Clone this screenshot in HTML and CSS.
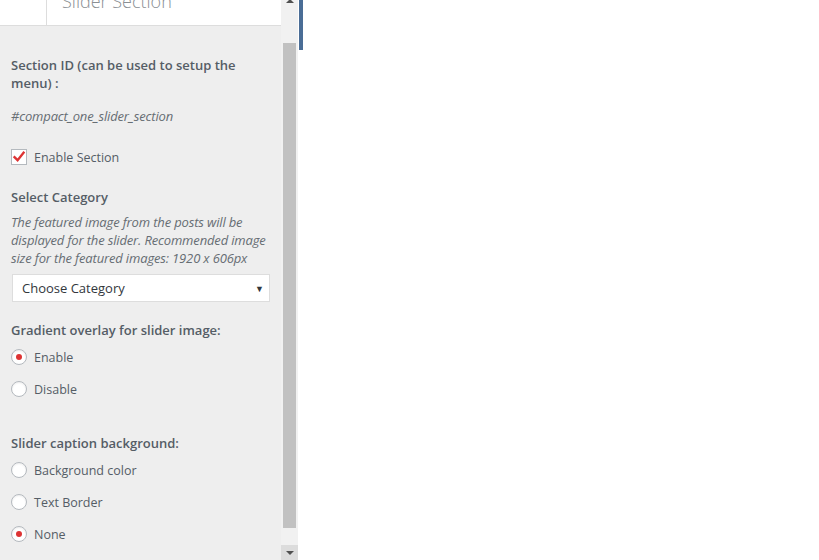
FILE: index.html
```html
<!DOCTYPE html>
<html>
<head>
<meta charset="utf-8">
<link rel="stylesheet" href="styles.css">
</head>
<body>
<div class="app">
  <div class="sidebar">
    <div class="head">
      <div class="back"></div>
      <div class="title">Slider Section</div>
    </div>
    <div class="controls">
      <div class="ctrl ctrl-id">
        <div class="label">Section ID (can be used to setup the menu) :</div>
        <div class="idtext">#compact_one_slider_section</div>
      </div>
      <label class="check">
        <span class="box"><svg width="14" height="14" viewBox="0 0 14 14"><path d="M2.5 7.2 L5.6 10.2 L11.6 2.6" fill="none" stroke="#dd3333" stroke-width="2.3" stroke-linecap="square"/></svg></span>
        <span>Enable Section</span>
      </label>
      <div class="ctrl ctrl-cat">
        <div class="label">Select Category</div>
        <div class="desc">The featured image from the posts will be displayed for the slider. Recommended image size for the featured images: 1920 x 606px</div>
        <div class="select"><span>Choose Category</span><span class="caret">&#9660;</span></div>
      </div>
      <div class="ctrl ctrl-grad">
        <div class="label">Gradient overlay for slider image:</div>
        <div class="radio"><span class="dot on"></span><span>Enable</span></div>
        <div class="radio"><span class="dot"></span><span>Disable</span></div>
      </div>
      <div class="ctrl ctrl-cap">
        <div class="label">Slider caption background:</div>
        <div class="radio"><span class="dot"></span><span>Background color</span></div>
        <div class="radio"><span class="dot"></span><span>Text Border</span></div>
        <div class="radio"><span class="dot on"></span><span>None</span></div>
      </div>
    </div>
  </div>
  <div class="scrollbar">
    <div class="arrow up"></div>
    <div class="thumb"></div>
    <div class="btn"><div class="arrow down"></div></div>
  </div>
  <div class="gap"></div>
  <div class="accent"></div>
  <div class="main"></div>
</div>
</body>
</html>
```
FILE: styles.css
```css
html, body {
  margin: 0;
  padding: 0;
  height: 100%;
  background: #fff;
  overflow: hidden;
}
body {
  font-family: "Open Sans", "Noto Sans", sans-serif;
  color: #555d66;
}
.app {
  display: flex;
  height: 560px;
}
.sidebar {
  width: 281px;
  background: #eeeeee;
  display: flex;
  flex-direction: column;
  overflow: hidden;
}
.head {
  height: 25px;
  background: #fff;
  border-bottom: 1px solid #dddddd;
  display: flex;
  overflow: hidden;
  flex-shrink: 0;
}
.back {
  width: 46px;
  border-right: 1px solid #dddddd;
}
.title {
  font-size: 18px;
  font-weight: 300;
  color: #8a8f94;
  line-height: 20px;
  margin-top: -9px;
  padding-left: 15px;
  white-space: nowrap;
}
.controls {
  padding: 30px 12px 0 11px;
  display: flex;
  flex-direction: column;
}
.label {
  font-size: 13px;
  font-weight: 600;
  line-height: 18px;
  color: #555d66;
}
.ctrl-id .label {
  padding-right: 20px;
}
.idtext {
  font-size: 13px;
  font-style: italic;
  color: #666d73;
  margin-top: 15px;
  line-height: 18px;
  letter-spacing: -0.15px;
}
.check {
  display: flex;
  align-items: center;
  gap: 7px;
  font-size: 12.5px;
  margin-top: 24px;
  height: 16px;
}
.box {
  width: 14px;
  height: 14px;
  border: 1px solid #b4b9be;
  background: #fff;
  display: flex;
  align-items: center;
  justify-content: center;
}
.ctrl-cat {
  margin-top: 23px;
}
.desc {
  font-size: 13px;
  font-style: italic;
  line-height: 18px;
  color: #666d73;
  margin-top: 7px;
  letter-spacing: -0.15px;
}
.select {
  margin: 7px 0 0 1px;
  height: 26px;
  background: #fff;
  border: 1px solid #dddddd;
  display: flex;
  align-items: center;
  justify-content: space-between;
  padding: 0 5px 0 9px;
  box-sizing: content-box;
  width: 242px;
  font-size: 13px;
  color: #32373c;
}
.caret {
  font-size: 9px;
  color: #32373c;
}
.ctrl-grad {
  margin-top: 19px;
}
.ctrl-grad .label {
  margin-bottom: 2px;
}
.radio {
  display: flex;
  align-items: center;
  gap: 7px;
  height: 32px;
  font-size: 12.5px;
}
.dot {
  width: 14px;
  height: 14px;
  border: 1px solid #b4b9be;
  border-radius: 50%;
  background: #fff;
  display: flex;
  align-items: center;
  justify-content: center;
  box-shadow: inset 0 1px 2px rgba(0,0,0,0.08);
}
.dot.on::after {
  content: "";
  width: 6px;
  height: 6px;
  border-radius: 50%;
  background: #dd3333;
}
.ctrl-cap {
  margin-top: 29px;
}
.ctrl-cap .label {
  margin-bottom: 2px;
}
.scrollbar {
  width: 17px;
  background: #f1f1f1;
  display: flex;
  flex-direction: column;
  align-items: center;
}
.arrow {
  width: 0;
  height: 0;
  border-left: 4px solid transparent;
  border-right: 4px solid transparent;
}
.arrow.up {
  border-bottom: 4px solid #505050;
  margin-top: -1px;
  height: 0;
}
.thumb {
  width: 13px;
  height: 485px;
  background: #c1c1c1;
  margin-top: 40px;
}
.btn {
  margin-top: auto;
  width: 17px;
  height: 15px;
  background: #dcdcdc;
  display: flex;
  align-items: center;
  justify-content: center;
}
.arrow.down {
  border-top: 4px solid #505050;
}
.gap {
  width: 1px;
}
.accent {
  width: 4px;
  height: 50px;
  background: #4a6d96;
}
.main {
  flex: 1;
  background: #fff;
}
```
